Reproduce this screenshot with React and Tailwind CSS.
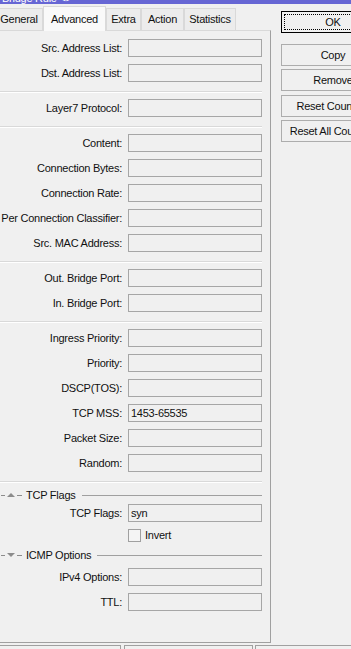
import React from "react";

const font = { fontFamily: '"Liberation Sans", Arial, sans-serif' };

function Field({ label, value, mt }) {
  return (
    <div className={`flex items-center h-[18px] ${mt}`}>
      <div className="w-[123px] text-right whitespace-nowrap pr-px">{label}</div>
      <div className="ml-[5px] w-[134px] h-[18px] border border-[#a6a6a6] bg-[#f0f0f0] flex items-center pl-[2px]">
        {value}
      </div>
    </div>
  );
}

function Sep() {
  return (
    <div className="mt-[9px] mb-[6px] mr-[8px]">
      <div className="h-px bg-[#d9d9d9]" />
      <div className="h-px bg-[#ffffff]" />
    </div>
  );
}

function GroupHeader({ title, up, mt }) {
  return (
    <div className={`flex items-center h-[14px] ${mt}`}>
      <svg width="24" height="8" viewBox="0 0 24 8" className="shrink-0">
        <line x1="1" y1="4.5" x2="5" y2="4.5" stroke="#8c8c8c" strokeWidth="1" />
        {up ? (
          <polygon points="7,6 15,6 11,2" fill="#8c8c8c" />
        ) : (
          <polygon points="7,2 15,2 11,6" fill="#8c8c8c" />
        )}
        <line x1="17" y1="4.5" x2="22" y2="4.5" stroke="#8c8c8c" strokeWidth="1" />
      </svg>
      <span className="ml-[2px] whitespace-nowrap">{title}</span>
      <div className="flex-1 h-px bg-[#a0a0a0] ml-[6px] mr-[8px]" />
    </div>
  );
}

function Tab({ label, w, selected, extra }) {
  return (
    <div
      className={`${w} ${extra || ""} flex items-center justify-center border-t border-l border-r ${
        selected
          ? "h-[25px] bg-[#f9f9f9] border-[#d9d9d9] relative z-10 -mb-px"
          : "h-[22px] bg-[#ececec] border-[#d9d9d9]"
      }`}
    >
      {label}
    </div>
  );
}

function Btn({ label, mt, focus }) {
  return (
    <div
      className={`w-[104px] h-[22px] ${mt} flex items-center justify-center ${
        focus ? "border border-[#000000] bg-[#f0f0f0]" : "border border-[#adadad] bg-[#f0f0f0]"
      } relative`}
    >
      {focus && <div className="absolute inset-[2px] border border-dotted border-[#000000]" />}
      <span className="whitespace-nowrap">{label}</span>
    </div>
  );
}

export default function App() {
  return (
    <div
      className="w-[351px] h-[649px] overflow-hidden bg-[#f0f0f0] text-[11px] tracking-[-0.25px] text-[#111111] leading-none"
      style={font}
    >
      <div className="h-[4px] bg-[#6666d4] overflow-hidden relative">
        <div className="absolute left-[2px] -top-[7px] text-[#ffffff] text-[11px] whitespace-nowrap">
          Bridge Rule &lt;&gt;
        </div>
      </div>
      <div className="flex">
        <div className="w-[271px] shrink-0">
          <div className="h-[26px] flex items-end">
            <Tab label="General" w="w-[48px]" extra="-ml-[5px]" />
            <Tab label="Advanced" w="w-[63px]" selected />
            <Tab label="Extra" w="w-[35px]" />
            <Tab label="Action" w="w-[43px]" />
            <Tab label="Statistics" w="w-[52px]" />
          </div>
          <div className="h-[613px] border-t border-t-[#d9d9d9] border-r border-b border-r-[#a0a0a0] border-b-[#a0a0a0] pt-[8px]">
            <Field label="Src. Address List:" />
            <Field label="Dst. Address List:" mt="mt-[7px]" />
            <Sep />
            <Field label="Layer7 Protocol:" />
            <Sep />
            <Field label="Content:" />
            <Field label="Connection Bytes:" mt="mt-[7px]" />
            <Field label="Connection Rate:" mt="mt-[7px]" />
            <Field label="Per Connection Classifier:" mt="mt-[7px]" />
            <Field label="Src. MAC Address:" mt="mt-[7px]" />
            <Sep />
            <Field label="Out. Bridge Port:" />
            <Field label="In. Bridge Port:" mt="mt-[7px]" />
            <Sep />
            <Field label="Ingress Priority:" />
            <Field label="Priority:" mt="mt-[7px]" />
            <Field label="DSCP(TOS):" mt="mt-[7px]" />
            <Field label="TCP MSS:" value="1453-65535" mt="mt-[7px]" />
            <Field label="Packet Size:" mt="mt-[7px]" />
            <Field label="Random:" mt="mt-[7px]" />
            <div className="mt-[9px] mr-[8px]">
              <div className="h-px bg-[#d9d9d9]" />
              <div className="h-px bg-[#ffffff]" />
            </div>
            <GroupHeader title="TCP Flags" up mt="mt-[5px]" />
            <Field label="TCP Flags:" value="syn" mt="mt-[2px]" />
            <div className="flex items-center h-[13px] mt-[7px]">
              <div className="ml-[128px] w-[13px] h-[13px] border border-[#a0a0a0] bg-[#f4f4f4]" />
              <span className="ml-[4px]">Invert</span>
            </div>
            <GroupHeader title="ICMP Options" mt="mt-[6px]" />
            <Field label="IPv4 Options:" mt="mt-[6px]" />
            <Field label="TTL:" mt="mt-[7px]" />
          </div>
        </div>
        <div className="ml-[10px] pt-[7px] shrink-0">
          <Btn label="OK" focus />
          <Btn label="Copy" mt="mt-[11px]" />
          <Btn label="Remove" mt="mt-[3px]" />
          <Btn label="Reset Counters" mt="mt-[4px]" />
          <Btn label="Reset All Counters" mt="mt-[3px]" />
        </div>
      </div>
      <div className="flex mt-[2px] h-[10px]">
        <div className="w-[121px] border-t border-r border-[#a0a0a0]" />
        <div className="ml-[3px] w-[129px] border-t border-l border-r border-[#a0a0a0]" />
        <div className="ml-[2px] flex-1 border-t border-l border-[#a0a0a0]" />
      </div>
    </div>
  );
}
